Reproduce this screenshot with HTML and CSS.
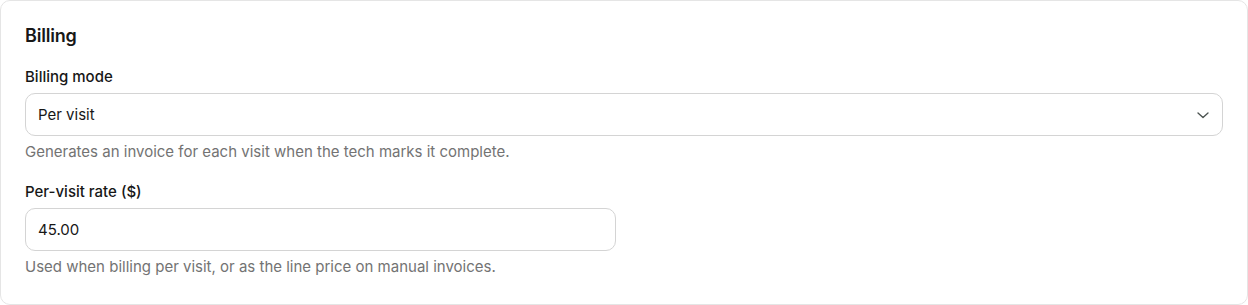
FILE: index.html
```html
<!DOCTYPE html>
<html>
<head>
<meta charset="utf-8">
<link rel="stylesheet" href="styles.css">
</head>
<body>
<section class="card">
  <h2 class="title">Billing</h2>
  <div class="field">
    <label class="label">Billing mode</label>
    <div class="select">
      <span>Per visit</span>
      <svg class="chev" width="20" height="20" viewBox="0 0 24 24" fill="none" stroke="currentColor" stroke-width="1.6" stroke-linecap="round" stroke-linejoin="round"><path d="m6 9.5 6 5.5 6-5.5"/></svg>
    </div>
    <p class="help">Generates an invoice for each visit when the tech marks it complete.</p>
  </div>
  <div class="grid">
    <div class="field">
      <label class="label">Per-visit rate ($)</label>
      <div class="input">45.00</div>
      <p class="help">Used when billing per visit, or as the line price on manual invoices.</p>
    </div>
  </div>
</section>
</body>
</html>
```

FILE: styles.css
```css
* { box-sizing: border-box; }
html, body { margin: 0; padding: 0; background: #ffffff; }
body {
  font-family: Inter, "Noto Sans", sans-serif;
  color: #171717;
  width: 1248px;
  height: 305px;
}
.card {
  border: 1px solid #e5e5e5;
  border-radius: 10px;
  padding: 21px 24px 24px 24px;
  height: 305px;
}
.title {
  margin: 0 0 17px 0;
  font-size: 18px;
  line-height: 28px;
  font-weight: 600;
  letter-spacing: -0.2px;
}
.field { display: flex; flex-direction: column; }
.label {
  font-size: 15px;
  line-height: 20px;
  font-weight: 500;
  margin-bottom: 6px;
}
.select, .input {
  height: 43px;
  border: 1px solid #d4d4d4;
  border-radius: 10px;
  display: flex;
  align-items: center;
  padding: 0 12px;
  font-size: 15px;
}
.select { justify-content: space-between; }
.chev { color: #4b5350; margin-right: -3px; }
.help {
  margin: 6px 0 0 0;
  font-size: 15px;
  line-height: 20px;
  color: #737373;
}
.grid {
  margin-top: 20px;
  display: grid;
  grid-template-columns: 1fr 1fr;
  column-gap: 16px;
}
```
